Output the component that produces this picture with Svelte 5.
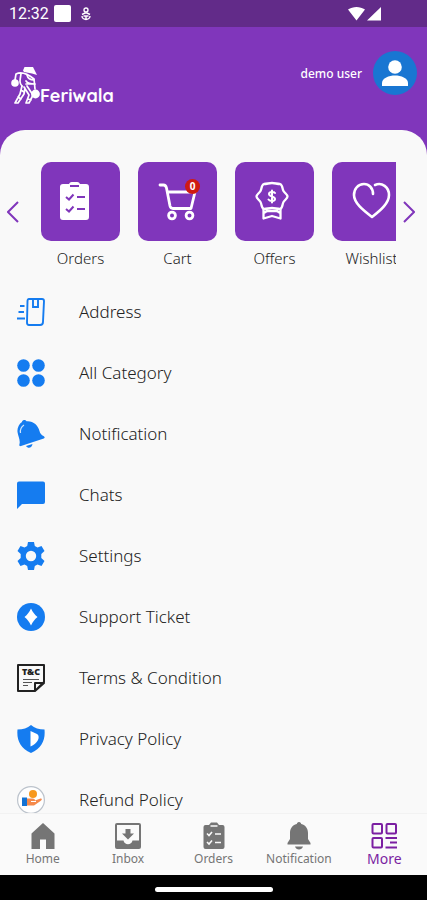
<script lang="ts">
    let active = "More";
    let cartCount = 0;
    let track: HTMLDivElement;

    const tiles = ["Orders", "Cart", "Offers", "Wishlist"];

    const menu = [
        "Address",
        "All Category",
        "Notification",
        "Chats",
        "Settings",
        "Support Ticket",
        "Terms & Condition",
        "Privacy Policy",
        "Refund Policy",
    ];

    const tabs = ["Home", "Inbox", "Orders", "Notification", "More"];

    // Moves the shortcuts by one tile
    const slide = (dir: number) => {
        track.scrollBy({ left: dir * 97, behavior: "smooth" });
    };
</script>

<div class="app">
    <div class="status">
        <span class="time">12:32</span>
        <span class="square"></span>
        <svg class="debug" width="10" height="14" viewBox="0 0 10 14" fill="none" stroke="#fff" stroke-width="1.4">
            <circle cx="5" cy="3" r="2" />
            <path d="M1 7.5 4 6h2l3 1.500M1 9c0 2 2 3.500 4 3.500S9 11 9 9M2.500 9h5M5 9v3" />
        </svg>
        <svg class="signal" width="34" height="15" viewBox="0 0 34 15" fill="#fff">
            <path d="M0 3.500C5 0 12 0 17 3.500L8.500 14.500zM33 1v13.500H19z" />
        </svg>
    </div>

    <header>
        <a class="logo" href="#home">
            <svg width="29" height="40" viewBox="0 0 29 40" fill="none" stroke="#fff" stroke-width="1.700" stroke-linecap="round" stroke-linejoin="round">
                <path d="M13.500 1H22l4 8-5-1.500-8-1.500-1-1.500z" fill="#fff" stroke="none" />
                <path d="M5 8c6-3 13 1 18 5l1 10M5 8 4 14M10 8c-1 6-2 9 1 12" />
                <path d="M16 9c1 4 3 5 7 5M15 15c2 3 5 3 9 3M15 18h7" />
                <path d="M11 20 9 28 4 37h3l6-9 1-6M13 21l5 8-3 8h3l4-8-6-9M10 24l3 2M7 31l3 2M17 33l3 1" />
                <circle cx="4" cy="17" r="3.800" fill="#fff" stroke="none" />
                <circle cx="24.500" cy="28" r="4.400" fill="#fff" stroke="none" />
            </svg>
            <span>Feriwala</span>
        </a>
        <a class="user" href="#profile">
            <span>demo user</span>
            <svg width="44" height="44" viewBox="0 0 44 44">
                <circle cx="22" cy="22" r="22" fill="#1976d2" />
                <circle cx="22" cy="16" r="6.800" fill="#fff" />
                <path d="M9 35v-3c0-5 7-7.500 13-7.500S35 27 35 32v3z" fill="#fff" />
            </svg>
        </a>
    </header>

    <main>
        <section class="shortcuts">
            <button class="arrow" aria-label="Previous" on:click={() => slide(-1)}>
                <svg width="12" height="22" viewBox="0 0 12 22"><path d="M11 1 1 11l10 10" /></svg>
            </button>
            <div class="track" bind:this={track}>
                {#each tiles as tile}
                    <a class="tile" href="#{tile.toLowerCase()}">
                        <span class="box">
                            {#if tile === "Orders"}
                                <svg class="clipboard" width="42" height="42" viewBox="0 0 42 42">
                                    <path d="M4 6a3 3 0 0 1 3-3h6a3 3 0 0 1 3-2h5a3 3 0 0 1 3 2h6a3 3 0 0 1 3 3v30a3 3 0 0 1-3 3H7a3 3 0 0 1-3-3z" fill="#fff" />
                                    <path d="M14 5h9M10 16l3 2.500 4.500-5M21 16h8M10 28l3 2.500 4.500-5M21 28h8" fill="none" stroke="#8036bb" stroke-width="2" />
                                </svg>
                            {:else if tile === "Cart"}
                                <svg width="42" height="42" viewBox="0 0 42 42" fill="none" stroke="#fff" stroke-width="2.800" stroke-linecap="round" stroke-linejoin="round">
                                    <path d="M3 4h3.500c2 0 2.500 1 3 3l3.500 18c.5 2 1 2.500 3 2.500h18L38 11H11" />
                                    <circle cx="15" cy="34.500" r="3.400" />
                                    <circle cx="32.500" cy="34.500" r="3.400" />
                                </svg>
                                <span class="badge">{cartCount}</span>
                            {:else if tile === "Offers"}
                                <svg class="medal" width="42" height="42" viewBox="0 0 42 42" fill="none" stroke="#fff" stroke-width="2.300" stroke-linecap="round" stroke-linejoin="round">
                                    <path d="M13 3c3 0 5-1 8-1s5 1 8 1c3 1 2 5 3.500 7 1.500 2.500 4 3.500 4 5.500s-2.500 3-4 5.500C31 23.500 32 27 29 28c-3 0-5-1-8-1s-5 1-8 1c-3-1-2-4.500-3.500-7-1.500-2.500-4-3.500-4-5.500s2.500-3 4-5.500C11 8 10 4 13 3z" />
                                    <path d="M12.500 28v9.500l8.500-2.500 8.500 2.500V28M12.500 32c2 0 2-2 4-2h9c2 0 2 2 4 2" />
                                    <path d="M24 12c-1-1.500-6-1.500-6 1 0 3 6 2 6 5 0 2.500-5 2.500-6.500.5M21 9.500v12" stroke-width="2" />
                                </svg>
                            {:else}
                                <svg width="42" height="42" viewBox="0 0 42 42" fill="none" stroke="#fff" stroke-width="2.600" stroke-linecap="round" stroke-linejoin="round">
                                    <path d="M22 13c0-6-4-10-9-10C7 3 3 8 3 14c0 8 9 15 18 22 9-7 17-14 17-22 0-8-7-13-14-10" />
                                </svg>
                            {/if}
                        </span>
                        <span class="caption">{tile}</span>
                    </a>
                {/each}
            </div>
            <button class="arrow" aria-label="Next" on:click={() => slide(1)}>
                <svg width="12" height="22" viewBox="0 0 12 22"><path d="m1 1 10 10L1 21" /></svg>
            </button>
        </section>

        <nav class="menu">
            {#each menu as item}
                <a href="#{item.toLowerCase().replaceAll(' ', '-')}">
                    <svg width="28" height="28" viewBox="0 0 28 28" fill="#157cf0">
                        {#if item === "Address"}
                            <g fill="none" stroke="#157cf0" stroke-width="1.900">
                                <path d="M12 1h13c1.500 0 2 .7 2 2l-1 21c0 2-1 3-3 3H12c-1.500 0-2-1-2-2.500L10.500 3c0-1.300.5-2 1.500-2z" />
                                <path d="M16 1v8h5V1M3 8h4.500M1.500 14h5.500M0 20.500h8" />
                            </g>
                        {:else if item === "All Category"}
                            <circle cx="6.500" cy="6.500" r="6.300" />
                            <circle cx="21.500" cy="6.500" r="6.300" />
                            <circle cx="6.500" cy="21.500" r="6.300" />
                            <circle cx="21.500" cy="21.500" r="6.300" />
                        {:else if item === "Notification"}
                            <path d="M5 2c0-2 3.500-3 4.500-.8C16 .5 21 5 22.500 11c.5 2.500 2 4 4 5 1.500.8 1.500 2 .3 2.500L4 26c-1.500.5-2-.5-1.500-2C3.500 20 1 16 .5 12 0 8 2 4 5 2z" />
                            <path d="M9 26c2 3 6 2 6.500-2z" />
                            <path d="M7 5c-3 2-4 5-3.500 8" fill="none" stroke="#cfe4fc" stroke-width="1.200" />
                        {:else if item === "Chats"}
                            <path d="M2 .5h24A2 2 0 0 1 28 2.500V21a2 2 0 0 1-2 2H5l-5 5V2.500A2 2 0 0 1 2 .5z" />
                        {:else if item === "Settings"}
                            <path fill-rule="evenodd" d="M11 0h6l.8 4 2.700 1.500L24.500 4l3 5-3.200 3v4l3.200 3-3 5-4-1.500-2.700 1.500L17 28h-6l-.8-4-2.700-1.500L3.500 24l-3-5 3.200-3v-4L.5 9l3-5 4 1.500L10.200 4zM14 8.800a5.200 5.200 0 1 0 0 10.400 5.200 5.200 0 0 0 0-10.400z" />
                        {:else if item === "Support Ticket"}
                            <circle cx="14" cy="14" r="14" />
                            <path d="M14 5.500c2 4 3.500 6 6.500 8.500-3 2.500-4.500 4.500-6.500 8.500-2-4-3.500-6-6.500-8.500 3-2.500 4.500-4.500 6.500-8.500z" fill="#fff" />
                        {:else if item === "Terms & Condition"}
                            <path d="M1 1h26v17l-9 9H1zM18 27v-8h9z" fill="none" stroke="#222" stroke-width="2" stroke-linejoin="round" />
                            <path d="M6 15.500h16M6 18.500h9M6 21.500h5" stroke="#555" stroke-width="1" />
                            <text x="14" y="11" text-anchor="middle" fill="#222">T&amp;C</text>
                        {:else if item === "Privacy Policy"}
                            <path d="M14 0c3.500 3 8 4.500 13.500 4.500C28.500 15 25 23 14 28 3 23-.5 15 .5 4.500 6 4.500 10.500 3 14 0z" />
                            <path d="M13.500 6 20 9c2 1 2 4 1 6-1.500 3-4 5-7.500 6.500z" fill="#fff" />
                        {:else}
                            <circle cx="14" cy="14" r="13.400" fill="#fff" stroke="#bcc3cc" stroke-width="1.200" />
                            <circle cx="16" cy="8" r="4" fill="#f7981d" />
                            <path d="M10 12.500h4c2 0 4 0 4 2l5.500-2c2 0 1.500 1.500 0 2.500L17 19.500h-7z" fill="#f58a4b" />
                            <path d="M14 15.500h5" stroke="#fff" stroke-width="1" />
                            <path d="M5 11.500h5V20H5z" fill="#1473d4" />
                        {/if}
                    </svg>
                    <span>{item}</span>
                </a>
            {/each}
        </nav>
    </main>

    <nav class="tabs">
        {#each tabs as tab}
            <button class:active={active === tab} on:click={() => (active = tab)}>
                <svg width="26" height="28" viewBox="0 0 26 28" fill="currentColor">
                    {#if tab === "Home"}
                        <path d="M13 1 1.500 11.500V27H10v-9.500h6V27h8.500V11.500z" />
                    {:else if tab === "Inbox"}
                        <path fill-rule="evenodd" d="M2 1h22a2 2 0 0 1 2 2v22a2 2 0 0 1-2 2H2a2 2 0 0 1-2-2V3a2 2 0 0 1 2-2zm0 2v15.500h6.500c1 5 8 5 9 0H24V3zm8.500 4h5v4.500H19L13 17.500 7 11.500h3.500z" />
                    {:else if tab === "Orders"}
                        <path d="M2.500 5a2 2 0 0 1 2-2H8l2-2.500h6L18 3h3.500a2 2 0 0 1 2 2v20a2 2 0 0 1-2 2h-17a2 2 0 0 1-2-2z" />
                        <path d="M9.500 4h7M6 11.500l2 2 3-3.500M14 12h6M6 20l2 2 3-3.500M14 20.500h6" fill="none" stroke="#fafafa" stroke-width="1.600" />
                    {:else if tab === "Notification"}
                        <path d="M13 0c1.500 0 2 1 2.200 2C20 3 22 7 22 11v6l2.500 4v1.500h-23V21L4 17v-6c0-4 2-8 6.800-9C11 1 11.500 0 13 0zM9 24.500h8c-1 4-7 4-8 0z" />
                    {:else}
                        <g fill="none" stroke="currentColor" stroke-width="2">
                            <rect x="1.500" y="2" width="9.500" height="9.500" rx="1" />
                            <rect x="15.500" y="2" width="9.500" height="9.500" rx="1" />
                            <rect x="1.500" y="16" width="9.500" height="9.500" rx="1" />
                            <path d="M14.500 16H26M19 20.500h7M14.500 25.500H26" />
                        </g>
                    {/if}
                </svg>
                <span>{tab}</span>
            </button>
        {/each}
    </nav>

    <div class="gesture"><span></span></div>
</div>

<style>
    :global(body) {
        margin: 0;
        background-color: #8036bb;
    }

    .app {
        display: flex;
        flex-direction: column;
        height: 100vh;
        overflow: hidden;
        background-color: #8036bb;
        font-family: "Noto Sans", "Open Sans", sans-serif;
    }

    a {
        color: inherit;
        text-decoration: none;
    }

    button {
        border: none;
        background: none;
        padding: 0;
        font-family: inherit;
        cursor: pointer;
    }

    svg {
        display: block;
        flex: none;
    }

    .status {
        display: flex;
        align-items: center;
        flex: none;
        height: 27px;
        padding: 0 45px 0 9px;
        background-color: #622b89;
        color: #fff;
    }

    .time {
        font-family: Roboto, sans-serif;
        font-size: 16px;
    }

    .square {
        width: 17px;
        height: 17px;
        margin: 0 10px 0 5px;
        border-radius: 2px;
        background-color: #fff;
    }

    .signal {
        margin-left: auto;
    }

    header {
        display: flex;
        justify-content: space-between;
        flex: none;
        height: 79px;
        padding: 24px 10px 0 11px;
        color: #fff;
    }

    .logo {
        display: flex;
        align-items: flex-end;
        align-self: flex-start;
        height: 55px;
        font-family: "Quicksand", Lato, sans-serif;
        font-size: 18px;
        font-weight: bold;
        line-height: 20px;
    }

    .user {
        display: flex;
        align-items: center;
        align-self: flex-start;
        gap: 11px;
        font-size: 12px;
        font-weight: 500;
    }

    main {
        flex: 1;
        min-height: 0;
        overflow: hidden;
        border-radius: 25px 25px 0 0;
        background-color: #f9f9f9;
        color: #222;
    }

    .shortcuts {
        display: flex;
        padding-top: 32px;
        height: 119px;
    }

    .arrow {
        display: flex;
        align-items: center;
        justify-content: center;
        flex: none;
        width: 25px;
        height: 100px;
    }

    .arrow:first-child {
        margin-right: 16px;
    }

    .arrow:last-child {
        margin-right: 6px;
    }

    .arrow path {
        fill: none;
        stroke: #8036bb;
        stroke-width: 2;
    }

    .track {
        display: flex;
        flex: 1;
        gap: 18px;
        min-width: 0;
        overflow: hidden;
    }

    .tile {
        flex: none;
        width: 79px;
        text-align: center;
    }

    .box {
        position: relative;
        display: flex;
        align-items: center;
        justify-content: center;
        height: 79px;
        border-radius: 10px;
        background-color: #8036bb;
    }

    .clipboard {
        margin-right: 8px;
    }

    .medal {
        margin-right: 6px;
    }

    .badge {
        position: absolute;
        top: 17px;
        right: 17px;
        width: 15px;
        height: 15px;
        border-radius: 50%;
        background-color: #cf1a12;
        color: #fff;
        font-size: 10px;
        font-weight: bold;
        line-height: 15px;
    }

    .caption {
        display: block;
        margin-top: 7px;
        font-size: 15px;
        font-weight: 300;
        line-height: 20px;
    }

    .menu a {
        display: flex;
        align-items: center;
        gap: 34px;
        height: 61px;
        padding-left: 17px;
        font-size: 17px;
        font-weight: 300;
    }

    .menu text {
        font-size: 9px;
        font-weight: 900;
    }

    .tabs {
        display: flex;
        flex: none;
        height: 62px;
        border-top: 1px solid #f2f2f2;
        box-sizing: border-box;
        background-color: #fafafa;
    }

    .tabs button {
        display: flex;
        flex: 1 1 0;
        flex-direction: column;
        align-items: center;
        min-width: 0;
        padding-top: 8px;
        color: #757575;
        font-size: 12px;
        line-height: 18px;
    }

    .tabs button.active {
        color: #7b1fa2;
        font-size: 14px;
    }

    .gesture {
        display: flex;
        align-items: center;
        justify-content: center;
        flex: none;
        height: 25px;
        background-color: #000;
    }

    .gesture span {
        width: 118px;
        height: 5px;
        margin-top: 4px;
        border-radius: 3px;
        background-color: #fff;
    }
</style>
